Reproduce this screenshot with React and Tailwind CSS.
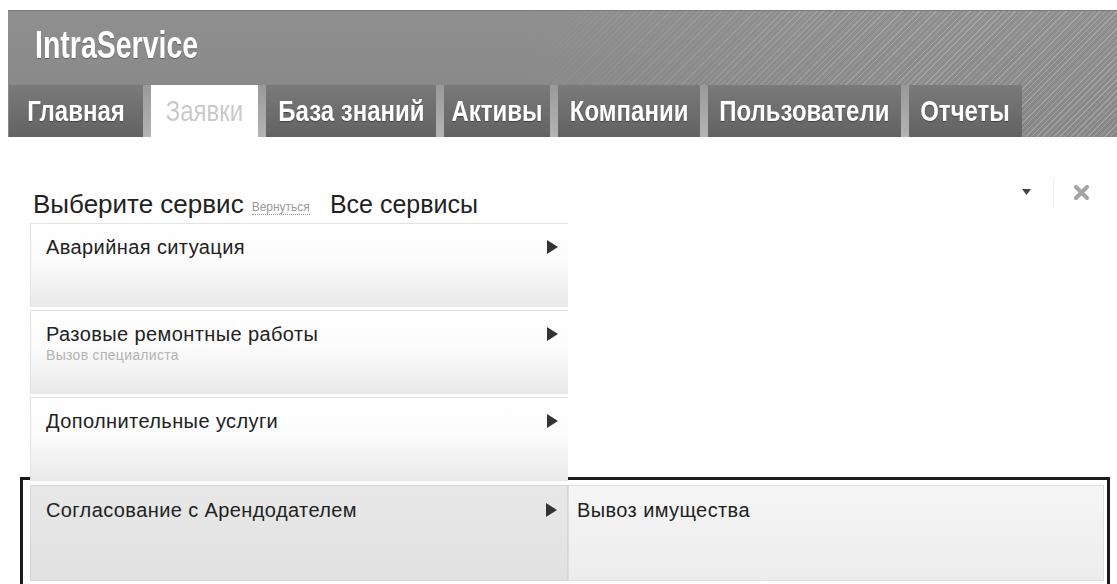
import React from "react";

const tabs = [
  { label: "Главная", w: "w-[134px]" },
  { label: "Заявки", w: "w-[107px]", active: true },
  { label: "База знаний", w: "w-[170px]" },
  { label: "Активы", w: "w-[106px]" },
  { label: "Компании", w: "w-[142px]" },
  { label: "Пользователи", w: "w-[193px]" },
  { label: "Отчеты", w: "w-[113px]" },
];

const services = [
  { title: "Аварийная ситуация" },
  { title: "Разовые ремонтные работы", note: "Вызов специалиста" },
  { title: "Дополнительные услуги" },
];

const Arrow = () => (
  <svg width="11" height="14" viewBox="0 0 11 14" className="shrink-0">
    <path d="M0 0 L11 7 L0 14 Z" fill="#333" />
  </svg>
);

const ServiceRow = ({ title, note }) => (
  <div className="h-[84px] border-t border-l border-[#e3e3e3] bg-[linear-gradient(to_bottom,#ffffff_0%,#fbfbfb_45%,#e9e9e9_100%)] pl-[15px] pr-[10px] pt-[11px]">
    <div className="flex items-center justify-between">
      <span className="text-[20px] leading-[24px] tracking-[0.4px] text-[#222]">{title}</span>
      <Arrow />
    </div>
    {note && (
      <div className="text-[14px] leading-[18px] tracking-[0.3px] text-[#b3b3b3]">{note}</div>
    )}
  </div>
);

const App = () => {
  return (
    <div className="min-h-screen bg-white font-['Liberation_Sans',Arial,sans-serif]">
      {/* Top bar */}
      <div className="pt-[10px] pl-[8px]">
        <header className="relative flex h-[127px] flex-col bg-[linear-gradient(to_bottom,#8f8f8f,#868686)] border-t border-[#7a7a7a]">
          <div className="pointer-events-none absolute inset-0 bg-[repeating-linear-gradient(135deg,rgba(255,255,255,0.22)_0px,rgba(255,255,255,0.22)_1px,transparent_1px,transparent_4px)] [mask-image:linear-gradient(to_right,transparent_45%,black_80%)]" />
          <div className="relative pl-[27px] pt-[14px]">
            <span className="inline-block origin-left scale-x-[0.75] text-[38px] font-bold leading-[40px] text-white [text-shadow:0_1px_1px_rgba(0,0,0,0.3)]">
              IntraService
            </span>
          </div>
          <nav className="relative mt-auto flex h-[52px] pl-[1px]">
            {tabs.map((t, i) => (
              <React.Fragment key={t.label}>
                {i > 0 && <div className="w-[8px] bg-[linear-gradient(to_bottom,#9a9a9a,#b4b4b4)]" />}
                <div
                  className={`${t.w} flex items-center justify-center ${
                    t.active
                      ? "bg-white text-[#c9c9c9]"
                      : "bg-[linear-gradient(to_bottom,#7a7a7a,#626262)] text-white [text-shadow:0_1px_1px_rgba(0,0,0,0.4)]"
                  }`}
                >
                  <span className={`inline-block scale-x-[0.8] text-[30px] leading-none whitespace-nowrap ${t.active ? "font-normal" : "font-bold"}`}>
                    {t.label}
                  </span>
                </div>
              </React.Fragment>
            ))}
          </nav>
        </header>
      </div>

      {/* Service picker */}
      <div className="mt-[50px] flex items-center pl-[33px] pr-[28px]">
        <span className="text-[26px] leading-[32px] text-[#222]">Выберите сервис</span>
        <span className="ml-[8px] mt-[6px] border-b border-dotted border-[#999] text-[12px] leading-[14px] text-[#9a9a9a]">
          Вернуться
        </span>
        <div className="ml-[20px] flex h-[34px] flex-1 items-center justify-between pr-[22px]">
          <span className="text-[25px] leading-[32px] text-[#222]">Все сервисы</span>
          <svg width="9" height="6" viewBox="0 0 9 6" className="-mt-[24px]">
            <path d="M0 0 L9 0 L4.5 6 Z" fill="#444" />
          </svg>
        </div>
        <div className="-mt-[22px] h-[30px] border-l border-[#ececec]" />
        <svg width="15" height="15" viewBox="0 0 15 15" className="ml-[20px] -mt-[24px]">
          <path d="M2 2 L13 13 M13 2 L2 13" stroke="#a3a3a3" strokeWidth="4" strokeLinecap="round" />
        </svg>
      </div>

      <div className="mt-[2px] ml-[30px] flex w-[538px] flex-col gap-[3px]">
        {services.map((s) => (
          <ServiceRow key={s.title} {...s} />
        ))}
      </div>

      {/* Selected category with its services */}
      <div className="-mt-[4px] ml-[20px] mr-[7px] flex h-[110px] border-[3px] border-[#1b1b1b] pl-[7px] pt-[5px] pr-[3px]">
        <div className="flex h-[96px] w-[538px] items-start justify-between bg-[linear-gradient(to_bottom,#e8e8e8,#e1e1e1)] border border-[#d6d6d6] pl-[15px] pr-[10px] pt-[12px]">
          <span className="text-[20px] leading-[24px] tracking-[0.4px] text-[#222]">Согласование с Арендодателем</span>
          <div className="mt-[5px]">
            <Arrow />
          </div>
        </div>
        <div className="h-[96px] flex-1 bg-[linear-gradient(to_bottom,#f6f6f6,#ececec)] border border-[#dedede] pl-[8px] pt-[12px]">
          <span className="text-[20px] leading-[24px] tracking-[0.4px] text-[#222]">Вывоз имущества</span>
        </div>
      </div>
    </div>
  );
};

export default App;
